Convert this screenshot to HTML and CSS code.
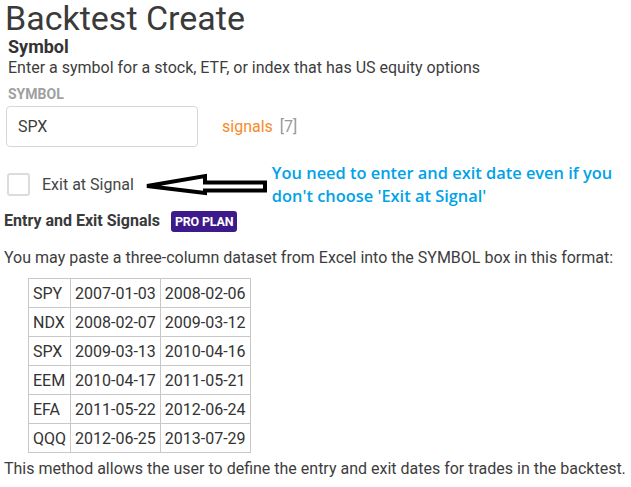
FILE: index.html
```html
<!DOCTYPE html>
<html lang="en">
<head>
  <meta charset="UTF-8" />
  <title>Backtest Create</title>
  <link rel="stylesheet" href="styles.css">
</head>
<body>
  <h1 class="title">Backtest Create</h1>

  <div class="symbol-block">
    <h2 class="sub">Symbol</h2>
    <p class="hint">Enter a symbol for a stock, ETF, or index that has US equity options</p>
    <label class="field-label" for="symbol">SYMBOL</label>
    <div class="symbol-row">
      <input id="symbol" class="symbol-input" type="text" value="SPX">
      <span class="signals">signals</span>
      <span class="count">[7]</span>
    </div>
  </div>

  <div class="exit-row">
    <label class="check">
      <span class="box"></span>
      <span class="check-text">Exit at Signal</span>
    </label>
    <svg class="arrow" width="126" height="26" viewBox="0 0 126 26">
      <path d="M4 14 L62 4 L62 10.5 L122 10.5 L122 18.5 L62 18.5 L62 21 Z" fill="#fff" stroke="#000" stroke-width="4" stroke-linejoin="miter"/>
    </svg>
    <p class="note">You need to enter and exit date even if you don't choose 'Exit at Signal'</p>
  </div>

  <div class="signals-head">
    <h3>Entry and Exit Signals</h3>
    <span class="badge">PRO PLAN</span>
  </div>

  <p class="text">You may paste a three-column dataset from Excel into the SYMBOL box in this format:</p>

  <table class="data">
    <tr><td>SPY</td><td>2007-01-03</td><td>2008-02-06</td></tr>
    <tr><td>NDX</td><td>2008-02-07</td><td>2009-03-12</td></tr>
    <tr><td>SPX</td><td>2009-03-13</td><td>2010-04-16</td></tr>
    <tr><td>EEM</td><td>2010-04-17</td><td>2011-05-21</td></tr>
    <tr><td>EFA</td><td>2011-05-22</td><td>2012-06-24</td></tr>
    <tr><td>QQQ</td><td>2012-06-25</td><td>2013-07-29</td></tr>
  </table>

  <p class="text last">This method allows the user to define the entry and exit dates for trades in the backtest.</p>
</body>
</html>
```

FILE: styles.css
```css
* {
  margin: 0;
  padding: 0;
  box-sizing: border-box;
}

body {
  font-family: Roboto, 'Liberation Sans', sans-serif;
  color: #3d3d3d;
  background: #fff;
  padding: 0 4px;
  width: 631px;
}

.title {
  font-size: 34px;
  font-weight: 400;
  line-height: 40px;
  margin-top: -2px;
  color: #3a3a3a;
  margin-left: 1px;
}

.symbol-block {
  padding-left: 4px;
}

.sub {
  margin-top: -1px;
  font-size: 18px;
  font-weight: 700;
  line-height: 20px;
  color: #333;
}

.hint {
  font-size: 16px;
  line-height: 22px;
  color: #3d3d3d;
}

.field-label {
  display: block;
  margin-top: 7px;
  font-size: 14px;
  font-weight: 700;
  color: #a0a0a0;
  line-height: 16px;
}

.symbol-row {
  display: flex;
  align-items: center;
  margin-top: 4px;
}

.symbol-input {
  width: 192px;
  height: 41px;
  margin-left: -2px;
  border: 1px solid #d6d6d6;
  border-radius: 4px;
  padding: 0 11px;
  font-family: inherit;
  font-size: 16px;
  color: #3d3d3d;
}

.signals {
  margin-left: 24px;
  font-size: 16px;
  color: #f58a2a;
}

.count {
  margin-left: 7px;
  font-size: 16px;
  color: #999;
}

.exit-row {
  display: flex;
  align-items: center;
  margin-top: 12px;
  height: 50px;
}

.check {
  display: flex;
  align-items: center;
  margin-left: 3px;
}

.box {
  width: 23px;
  height: 23px;
  border: 2px solid #dcdcdc;
  border-radius: 3px;
}

.check-text {
  margin-left: 12px;
  font-size: 16px;
  color: #454545;
}

.arrow {
  margin-left: 9px;
  margin-top: 2px;
}

.note {
  margin-left: 3px;
  width: 352px;
  font-family: 'Open Sans', sans-serif;
  font-size: 16.4px;
  font-weight: 600;
  line-height: 23px;
  color: #00a2e8;
}

.signals-head {
  display: flex;
  align-items: center;
  gap: 11px;
  height: 22px;
  margin-top: 1px;
}

.signals-head h3 {
  font-size: 16px;
  font-weight: 700;
  line-height: 22px;
  color: #3a3a3a;
}

.badge {
  background: #3d1a8a;
  color: #fff;
  font-size: 12.5px;
  font-weight: 700;
  padding: 0 4px;
  height: 21px;
  line-height: 21px;
  border-radius: 3px;
  letter-spacing: -0.2px;
}

.text {
  font-size: 16px;
  line-height: 22px;
  margin-top: 15px;
  color: #3d3d3d;
}

.data {
  border-collapse: collapse;
  margin: 9px 0 0 24px;
  font-size: 16px;
  color: #333;
}

.data tr {
  height: 29px;
}

.data td {
  border: 1px solid #c8c8c8;
  padding: 0 4px;
}

.text.last {
  margin-top: 5px;
}
```
